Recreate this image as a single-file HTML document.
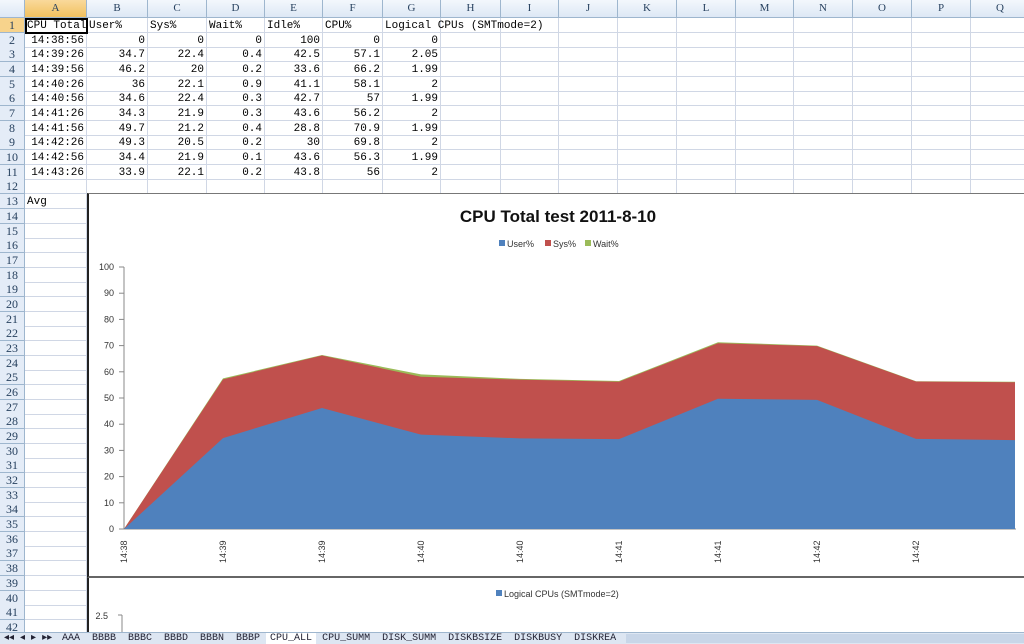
<!DOCTYPE html><html><head><meta charset="utf-8"><style>
body{margin:0;width:1024px;height:644px;overflow:hidden;background:#fff;position:relative;font-family:"Liberation Mono","Noto Sans CJK SC",monospace;font-size:11px}
.a{position:absolute;box-sizing:border-box}
.ch{background:linear-gradient(#f3f7fc,#dde8f5);border-right:1px solid #9eb6ce;border-bottom:1px solid #9eb6ce;color:#27415f;text-align:center;font-family:"Liberation Serif",serif;font-size:11px;line-height:17px;height:18px;top:0}
.rh{background:#e4ecf7;border-bottom:1px solid #9eb6ce;border-right:1px solid #9eb6ce;color:#27415f;text-align:center;left:0;width:25px;font-family:"Liberation Serif",serif;font-size:12px}
.c{border-right:1px solid #d0d7e5;border-bottom:1px solid #d0d7e5;white-space:nowrap;padding:0 2px;font-size:11px}
</style></head><body>
<div id="g"></div>
<div class="a" style="left:87px;top:193px;width:937px;height:385px;background:#fff;border-left:2px solid #222;border-top:1px solid #777;border-bottom:2px solid #666"></div>
<div class="a" style="left:87px;top:578px;width:937px;height:54px;background:#fff;border-left:2px solid #222"></div>
<svg class="a" style="left:0;top:0" width="1024" height="644">
<g font-family="Liberation Sans,sans-serif">
<text x="558" y="222" font-size="17" font-weight="bold" text-anchor="middle" fill="#111">CPU Total test  2011-8-10</text>
<rect x="499" y="240" width="6" height="6" fill="#4f81bd"/><text x="507" y="247" font-size="9" fill="#333">User%</text>
<rect x="545" y="240" width="6" height="6" fill="#c0504d"/><text x="553" y="247" font-size="9" fill="#333">Sys%</text>
<rect x="585" y="240" width="6" height="6" fill="#9bbb59"/><text x="593" y="247" font-size="9" fill="#333">Wait%</text>
<g id="yax" font-size="9" fill="#333" text-anchor="end"></g>
<line x1="124" y1="267" x2="124" y2="529" stroke="#888"/>
<line x1="124" y1="529" x2="1016" y2="529" stroke="#888"/>
<polygon id="pw" fill="#9bbb59"/>
<polygon id="ps" fill="#c0504d"/>
<polygon id="pu" fill="#4f81bd"/>
<g id="xax" font-size="9" fill="#333"></g>
<rect x="496" y="590" width="6" height="6" fill="#4f81bd"/><text x="504" y="597" font-size="9" fill="#333">Logical CPUs (SMTmode=2)</text>
<text x="108" y="619" font-size="9" fill="#333" text-anchor="end">2.5</text>
<line x1="118" y1="615" x2="122" y2="615" stroke="#888"/><line x1="122" y1="615" x2="122" y2="632" stroke="#888"/>
</g></svg>
<div class="a" style="left:0;top:632px;width:1024px;height:12px;background:#dde6f2;border-top:1px solid #9eb6ce;font-size:10px;line-height:11px;color:#223;white-space:nowrap">
<span style="position:absolute;left:4px">◂◂ ◂ ▸ ▸▸</span>
<span style="position:absolute;left:62px">AAA &nbsp;BBBB &nbsp;BBBC &nbsp;BBBD &nbsp;BBBN &nbsp;BBBP <span style="background:#fff;padding:0 4px">CPU_ALL</span> CPU_SUMM &nbsp;DISK_SUMM &nbsp;DISKBSIZE &nbsp;DISKBUSY &nbsp;DISKREA</span>
<span style="position:absolute;left:626px;top:1px;width:398px;height:9px;background:#c8d6e8"></span></div>
<script>
var cx=[25,87,148,207,265,323,383,441,501,559,618,677,736,794,853,912,971,1030];
var L="ABCDEFGHIJKLMNOPQ",h="";
function rt(n){return 18+(n-1)*14.68}
for(var i=0;i<17;i++)h+='<div class="a ch" style="left:'+cx[i]+'px;width:'+(cx[i+1]-cx[i])+'px;'+(i==0?'background:linear-gradient(#f9d99b,#f1c15f);':'')+'">'+L[i]+'</div>';
h+='<div class="a ch" style="left:0;width:25px"></div>';
for(var n=1;n<=42;n++){var t=rt(n);h+='<div class="a rh" style="top:'+t+'px;height:15px;line-height:15px;'+(n==1?'background:#f7d38c;':'')+'">'+n+'</div>';
for(var i=0;i<17;i++)h+='<div class="a c" style="left:'+cx[i]+'px;top:'+t+'px;width:'+(cx[i+1]-cx[i])+'px;height:15px"></div>';}
var d=[["14:38:56",0,0,0,100,0,0],["14:39:26",34.7,22.4,0.4,42.5,57.1,2.05],["14:39:56",46.2,20,0.2,33.6,66.2,1.99],["14:40:26",36,22.1,0.9,41.1,58.1,2],["14:40:56",34.6,22.4,0.3,42.7,57,1.99],["14:41:26",34.3,21.9,0.3,43.6,56.2,2],["14:41:56",49.7,21.2,0.4,28.8,70.9,1.99],["14:42:26",49.3,20.5,0.2,30,69.8,2],["14:42:56",34.4,21.9,0.1,43.6,56.3,1.99],["14:43:26",33.9,22.1,0.2,43.8,56,2]];
var hd=["CPU Total","User%","Sys%","Wait%","Idle%","CPU%","Logical CPUs (SMTmode=2)"];
function cell(i,n,txt,r){return '<div class="a" style="left:'+cx[i]+'px;top:'+(rt(n)+1)+'px;width:'+(cx[i+1]-cx[i]-3)+'px;line-height:14px;'+(r?'text-align:right;':'padding-left:2px;')+'white-space:nowrap;font-size:11px">'+txt+'</div>';}
for(var i=0;i<7;i++)h+=cell(i,1,hd[i],0);
for(var r=0;r<10;r++)for(var i=0;i<7;i++)h+=cell(i,r+2,d[r][i],1);
h+=cell(0,13,"Avg",0);
h+='<div class="a" style="left:25px;top:18px;width:63px;height:16px;border:2px solid #000"></div>';
document.getElementById("g").innerHTML=h;
function Y(v){return 529-2.62*v}
var X=[];for(var k=0;k<10;k++)X.push(124+k*99);
function poly(f){var p="";for(var k=0;k<10;k++)p+=X[k]+","+Y(f(d[k]))+" ";p+=X[9]+",529 124,529";return p}
document.getElementById("pu").setAttribute("points",poly(function(r){return r[1]}));
document.getElementById("ps").setAttribute("points",poly(function(r){return r[1]+r[2]}));
document.getElementById("pw").setAttribute("points",poly(function(r){return r[1]+r[2]+r[3]}));
var s="";for(var v=0;v<=100;v+=10)s+='<text x="114" y="'+(Y(v)+3)+'">'+v+'</text><line x1="119" y1="'+Y(v)+'" x2="124" y2="'+Y(v)+'" stroke="#888"/>';
document.getElementById("yax").innerHTML=s;
var xl=["14:38","14:39","14:39","14:40","14:40","14:41","14:41","14:42","14:42"];s="";
for(var k=0;k<9;k++)s+='<text transform="translate('+(X[k]+3)+',563) rotate(-90)">'+xl[k]+'</text>';
document.getElementById("xax").innerHTML=s;
</script>
</body></html>
